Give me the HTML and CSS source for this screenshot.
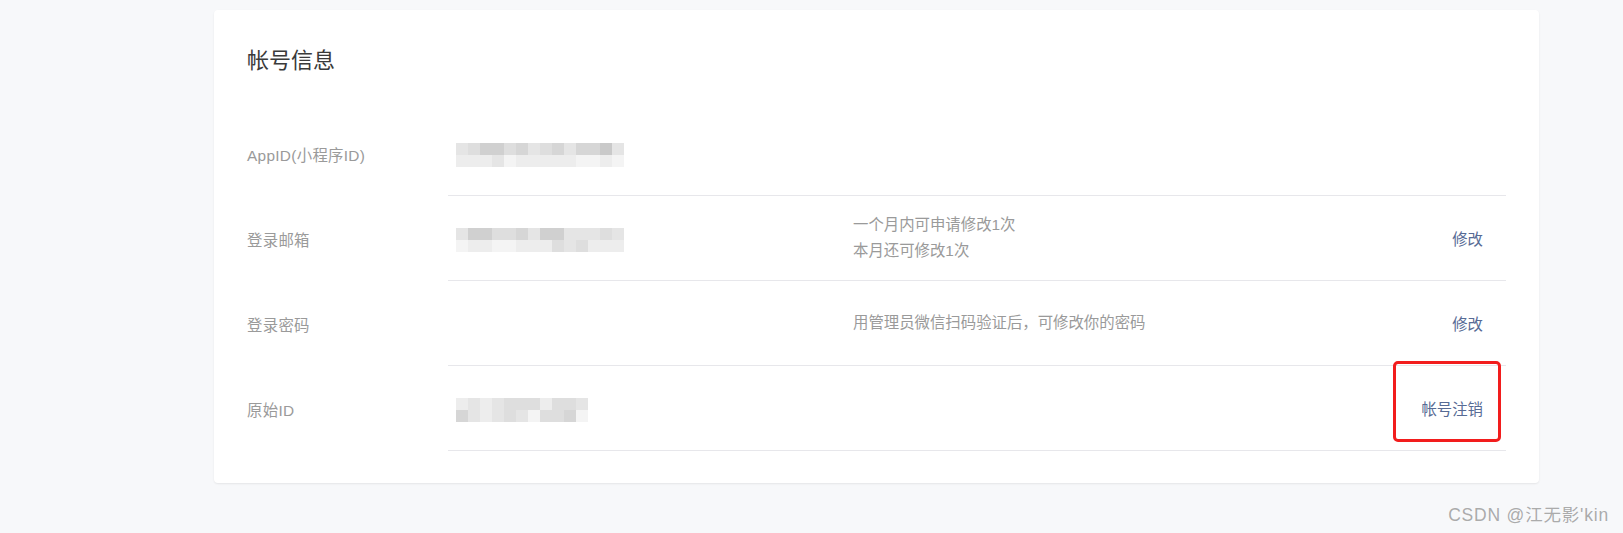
FILE: index.html
```html
<!DOCTYPE html>
<html lang="zh-CN">
<head>
<meta charset="utf-8">
<title>帐号信息</title>
<link rel="stylesheet" href="styles.css">
</head>
<body>
<main class="page">
  <section class="card">
    <h2 class="card-title">帐号信息</h2>
    <div class="rows">
      <div class="row">
        <div class="label">AppID(小程序ID)</div>
        <div class="body">
          <div class="value">
            <div class="mosaic cols14">
              <span class="s4"></span><span class="s3"></span><span class="s1"></span><span class="s1"></span><span class="s3"></span><span class="s2"></span><span class="s4"></span><span class="s3"></span><span class="s2"></span><span class="s4"></span><span class="s2"></span><span class="s2"></span><span class="s0"></span><span class="s4"></span>
              <span class="s5"></span><span class="s5"></span><span class="s5"></span><span class="s4"></span><span class="s6"></span><span class="s5"></span><span class="s5"></span><span class="s5"></span><span class="s5"></span><span class="s5"></span><span class="s6"></span><span class="s6"></span><span class="s5"></span><span class="s6"></span>
            </div>
          </div>
          <div class="desc"></div>
          <div class="action"></div>
        </div>
      </div>
      <div class="row">
        <div class="label">登录邮箱</div>
        <div class="body">
          <div class="value">
            <div class="mosaic cols14">
              <span class="s4"></span><span class="s1"></span><span class="s1"></span><span class="s3"></span><span class="s3"></span><span class="s2"></span><span class="s4"></span><span class="s1"></span><span class="s1"></span><span class="s4"></span><span class="s4"></span><span class="s4"></span><span class="s3"></span><span class="s4"></span>
              <span class="s6"></span><span class="s5"></span><span class="s5"></span><span class="s6"></span><span class="s6"></span><span class="s5"></span><span class="s5"></span><span class="s5"></span><span class="s3"></span><span class="s4"></span><span class="s3"></span><span class="s5"></span><span class="s5"></span><span class="s5"></span>
            </div>
          </div>
          <div class="desc">
            <p>一个月内可申请修改1次</p>
            <p>本月还可修改1次</p>
          </div>
          <div class="action"><a href="#" class="link">修改</a></div>
        </div>
      </div>
      <div class="row">
        <div class="label">登录密码</div>
        <div class="body">
          <div class="value"></div>
          <div class="desc">
            <p>用管理员微信扫码验证后，可修改你的密码</p>
          </div>
          <div class="action"><a href="#" class="link">修改</a></div>
        </div>
      </div>
      <div class="row">
        <div class="label">原始ID</div>
        <div class="body">
          <div class="value">
            <div class="mosaic cols11">
              <span class="s5"></span><span class="s4"></span><span class="s5"></span><span class="s4"></span><span class="s3"></span><span class="s3"></span><span class="s3"></span><span class="s5"></span><span class="s3"></span><span class="s3"></span><span class="s4"></span>
              <span class="s2"></span><span class="s4"></span><span class="s5"></span><span class="s4"></span><span class="s3"></span><span class="s4"></span><span class="s6"></span><span class="s3"></span><span class="s3"></span><span class="s2"></span><span class="s6"></span>
            </div>
          </div>
          <div class="desc"></div>
          <div class="action"><a href="#" class="link">帐号注销</a></div>
          <div class="highlight"></div>
        </div>
      </div>
    </div>
  </section>
</main>
<div class="watermark">CSDN @江无影'kin</div>
</body>
</html>
```
FILE: styles.css
```css
html, body {
  margin: 0;
  padding: 0;
}
body {
  width: 1623px;
  height: 533px;
  overflow: hidden;
  background: #f7f8fa;
  font-family: "Liberation Sans", "Noto Sans CJK SC", sans-serif;
  position: relative;
}
.page {
  padding: 10px 84px 0 214px;
}
.card {
  background: #fff;
  border-radius: 4px;
  box-shadow: 0 1px 2px rgba(0, 0, 0, 0.08);
  padding: 34px 33px 32px 33px;
}
.card-title {
  margin: 0 0 33px;
  font-size: 22px;
  line-height: 34px;
  font-weight: normal;
  color: #3a3a3a;
}
.rows {
  display: flex;
  flex-direction: column;
}
.row {
  display: flex;
}
.label {
  width: 201px;
  flex: none;
  display: flex;
  align-items: center;
  font-size: 15.4px;
  letter-spacing: 0.3px;
  color: #9a9a9a;
}
.body {
  flex: 1;
  display: flex;
  align-items: center;
  height: 84px;
  border-bottom: 1px solid #e7e7eb;
  position: relative;
}
.value {
  width: 397px;
  flex: none;
  padding-left: 8px;
  display: flex;
  align-items: center;
}
.mosaic {
  display: grid;
  grid-auto-rows: 12px;
  margin-top: 3px;
}
.cols14 { grid-template-columns: repeat(14, 12px); }
.cols11 { grid-template-columns: repeat(11, 12px); }
.s0 { background: #c9c9c9; }
.s1 { background: #d0d0d0; }
.s2 { background: #d6d6d6; }
.s3 { background: #dedede; }
.s4 { background: #e5e5e5; }
.s5 { background: #ededed; }
.s6 { background: #f4f4f4; }
.desc {
  flex: 1;
  font-size: 15.4px;
  color: #9a9a9a;
  line-height: 26px;
}
.desc p {
  margin: 0;
}
.action {
  padding-right: 23px;
  font-size: 15.4px;
}
.link {
  color: #576b95;
  text-decoration: none;
}
.highlight {
  position: absolute;
  right: 5px;
  top: -5px;
  width: 102px;
  height: 75px;
  border: 3px solid #f21d1d;
  border-radius: 5px;
}
.watermark {
  position: absolute;
  right: 14px;
  bottom: 7px;
  font-size: 17.5px;
  color: rgba(150, 150, 150, 0.8);
  letter-spacing: 0.8px;
}
```
